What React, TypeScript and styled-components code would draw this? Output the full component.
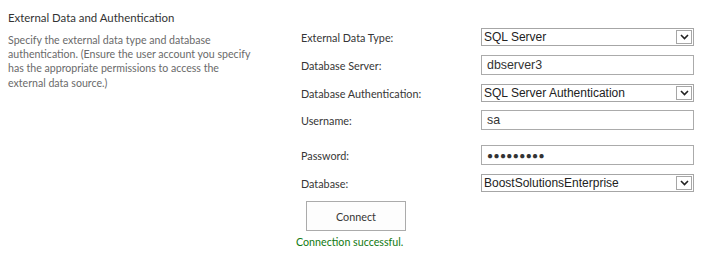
import { FC } from 'react'
import styled, { createGlobalStyle } from 'styled-components'

const GlobalStyle = createGlobalStyle`
  html, body {
    margin: 0;
    padding: 0;
    background: #fff;
  }
  body {
    font-family: Lato, "Noto Sans", sans-serif;
  }
`

const Page = styled.div`
  display: flex;
  width: 701px;
  height: 253px;
  box-sizing: border-box;
  padding: 9px 0 0 8px;
`

const Intro = styled.div`
  width: 293px;
  flex-shrink: 0;
`

const Title = styled.h3`
  margin: 0;
  font-size: 11.4px;
  font-weight: 400;
  color: #333;
  line-height: 17px;
`

const Description = styled.p`
  margin: 7px 0 0;
  width: 250px;
  font-size: 10.6px;
  line-height: 14.2px;
  color: #6a6a6a;
`

const Fields = styled.div`
  display: flex;
  flex-direction: column;
  padding-top: 19px;
`

const Row = styled.div<{ $gap: number }>`
  display: flex;
  align-items: center;
  margin-top: ${p => p.$gap}px;
  &:first-child {
    margin-top: 0;
  }
`

const Label = styled.label`
  width: 180px;
  font-size: 10.8px;
  color: #363636;
`

const SelectBox = styled.div`
  display: flex;
  align-items: center;
  width: 213px;
  height: 18px;
  box-sizing: border-box;
  border: 1px solid #a6a6a6;
  background: #fff;
  font-family: "Liberation Sans", Arial, sans-serif;
  font-size: 12px;
  color: #222;
`

const SelectText = styled.span`
  flex: 1;
  padding-left: 2px;
  white-space: nowrap;
  overflow: hidden;
`

const SelectArrow = styled.span`
  display: flex;
  align-items: center;
  justify-content: center;
  width: 16px;
  height: 14px;
  margin-right: 1px;
  box-sizing: border-box;
  border: 1px solid #a6a6a6;
  background: #fff;
`

const TextBox = styled.div`
  display: flex;
  align-items: center;
  width: 213px;
  height: 20px;
  box-sizing: border-box;
  padding-left: 5px;
  border: 1px solid #ababab;
  font-family: "Liberation Sans", Arial, sans-serif;
  font-size: 12.4px;
  color: #333;
`

const Dots = styled.span`
  font-size: 10px;
  letter-spacing: 0.4px;
  color: #333;
`

const Button = styled.button`
  margin: 9px 0 0 5px;
  width: 100px;
  height: 30px;
  border: 1px solid #ababab;
  background: #fdfdfd;
  font-family: Lato, "Noto Sans", sans-serif;
  font-size: 10.8px;
  color: #363636;
  padding: 0;
`

const Status = styled.div`
  margin: 4px 0 0 -5px;
  font-size: 10.7px;
  color: #117a11;
`

const Chevron: FC = () => (
  <svg width="9" height="6" viewBox="0 0 9 6">
    <polyline points="1,1 4.5,4.5 8,1" fill="none" stroke="#222" strokeWidth="1.6" />
  </svg>
)

const Select: FC<{ value: string }> = ({ value }) => (
  <SelectBox>
    <SelectText>{value}</SelectText>
    <SelectArrow>
      <Chevron />
    </SelectArrow>
  </SelectBox>
)

const App: FC = () => (
  <>
    <GlobalStyle />
    <Page>
      <Intro>
        <Title>External Data and Authentication</Title>
        <Description>
          Specify the external data type and database authentication. (Ensure the user account you
          specify has the appropriate permissions to access the external data source.)
        </Description>
      </Intro>
      <Fields>
        <Row $gap={0}>
          <Label>External Data Type:</Label>
          <Select value="SQL Server" />
        </Row>
        <Row $gap={9}>
          <Label>Database Server:</Label>
          <TextBox>dbserver3</TextBox>
        </Row>
        <Row $gap={9}>
          <Label>Database Authentication:</Label>
          <Select value="SQL Server Authentication" />
        </Row>
        <Row $gap={8}>
          <Label>Username:</Label>
          <TextBox>sa</TextBox>
        </Row>
        <Row $gap={15}>
          <Label>Password:</Label>
          <TextBox>
            <Dots>●●●●●●●●●</Dots>
          </TextBox>
        </Row>
        <Row $gap={9}>
          <Label>Database:</Label>
          <Select value="BoostSolutionsEnterprise" />
        </Row>
        <div>
          <Button>Connect</Button>
          <Status>Connection successful.</Status>
        </div>
      </Fields>
    </Page>
  </>
)

export default App
